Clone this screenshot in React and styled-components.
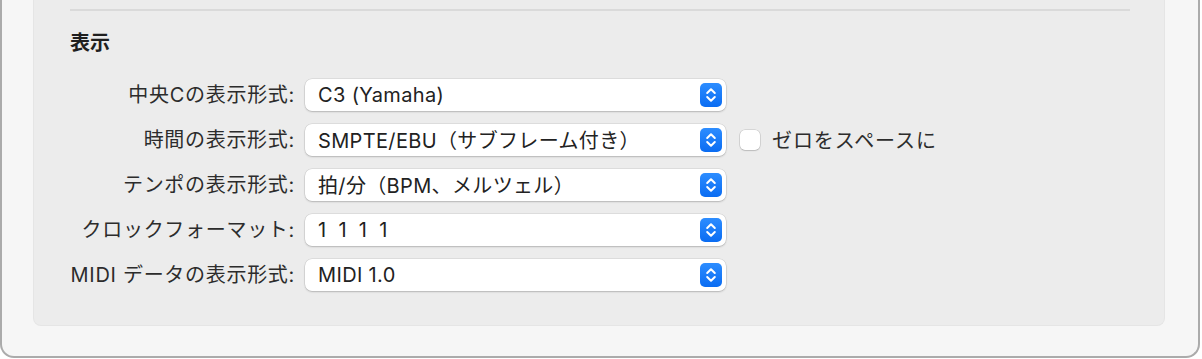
import React from "react";
import styled, { createGlobalStyle } from "styled-components";

const GlobalStyle = createGlobalStyle`
  html, body {
    margin: 0;
    padding: 0;
    background: #ffffff;
  }
  body {
    font-family: "Inter", "Noto Sans CJK JP", sans-serif;
    -webkit-font-smoothing: antialiased;
  }
`;

const Window = styled.div`
  box-sizing: border-box;
  width: 1200px;
  height: 358px;
  background: #f6f6f6;
  border: 2px solid #ababab;
  border-top: none;
  border-radius: 0 0 14px 14px;
  padding: 0 33px 30px 31px;
  display: flex;
`;

const Panel = styled.section`
  box-sizing: border-box;
  flex: 1;
  background: #ececec;
  border: 1px solid #e5e5e5;
  border-top: none;
  border-radius: 0 0 8px 8px;
  padding: 9px 34px 0 36px;
  display: flex;
  flex-direction: column;
`;

const Divider = styled.hr`
  margin: 0;
  border: none;
  height: 1.5px;
  background: #dadada;
`;

const Heading = styled.h2`
  margin: 20px 0 0;
  font-size: 20px;
  line-height: 24px;
  font-weight: 700;
  color: #1f1f1f;
`;

const Form = styled.div`
  margin-top: 24px;
  display: grid;
  grid-template-columns: 225px 421px auto;
  column-gap: 10px;
  row-gap: 13px;
  align-items: center;
`;

const Label = styled.label`
  justify-self: end;
  font-size: 20px;
  letter-spacing: 0.7px;
  line-height: 32px;
  color: #2c2c2c;
  white-space: nowrap;
`;

const Popup = styled.div`
  box-sizing: border-box;
  height: 32px;
  background: #ffffff;
  border-radius: 7px;
  box-shadow: 0 0 0 0.5px rgba(0, 0, 0, 0.12), 0 1px 2px rgba(0, 0, 0, 0.18);
  display: flex;
  align-items: center;
  padding: 0 4px 0 13px;
`;

const Value = styled.span`
  flex: 1;
  font-size: 20px;
  letter-spacing: 0.35px;
  color: #222222;
  white-space: pre;
`;

const Stepper = styled.span`
  width: 22px;
  height: 24px;
  border-radius: 5px;
  background: linear-gradient(#2d8dff, #0a6cf2);
  display: flex;
  align-items: center;
  justify-content: center;
`;

const Extra = styled.div`
  display: flex;
  align-items: center;
  gap: 12px;
  padding-left: 4px;
`;

const Checkbox = styled.span`
  width: 20px;
  height: 20px;
  border-radius: 5px;
  background: #ffffff;
  box-shadow: 0 0 0 0.5px rgba(0, 0, 0, 0.18), 0 1px 1.5px rgba(0, 0, 0, 0.12);
`;

const CheckText = styled.span`
  font-size: 20px;
  letter-spacing: 0.9px;
  color: #2c2c2c;
`;

const Chevrons = () => (
  <svg width="22" height="24" viewBox="0 0 22 24">
    <path
      d="M7.2 10 L11 6.2 L14.8 10 M7.2 14 L11 17.8 L14.8 14"
      fill="none"
      stroke="#ffffff"
      strokeWidth="2"
      strokeLinecap="round"
      strokeLinejoin="round"
    />
  </svg>
);

const rows = [
  { label: "中央Cの表示形式:", value: "C3 (Yamaha)" },
  { label: "時間の表示形式:", value: "SMPTE/EBU（サブフレーム付き）", check: "ゼロをスペースに" },
  { label: "テンポの表示形式:", value: "拍/分（BPM、メルツェル）" },
  { label: "クロックフォーマット:", value: "1  1  1  1" },
  { label: "MIDI データの表示形式:", value: "MIDI 1.0" },
];

export default function App() {
  return (
    <>
      <GlobalStyle />
      <Window>
        <Panel>
          <Divider />
          <Heading>表示</Heading>
          <Form>
            {rows.map((row) => (
              <React.Fragment key={row.label}>
                <Label>{row.label}</Label>
                <Popup>
                  <Value>{row.value}</Value>
                  <Stepper>
                    <Chevrons />
                  </Stepper>
                </Popup>
                {row.check ? (
                  <Extra>
                    <Checkbox />
                    <CheckText>{row.check}</CheckText>
                  </Extra>
                ) : (
                  <span />
                )}
              </React.Fragment>
            ))}
          </Form>
        </Panel>
      </Window>
    </>
  );
}
